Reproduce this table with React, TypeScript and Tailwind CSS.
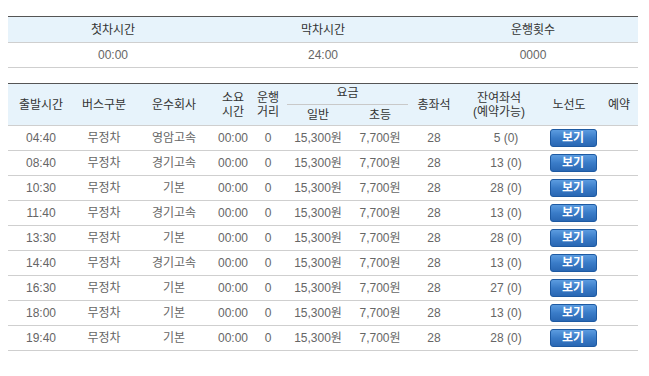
const rows = [
  { time: "04:40", company: "영암고속", left: "5 (0)" },
  { time: "08:40", company: "경기고속", left: "13 (0)" },
  { time: "10:30", company: "기본", left: "28 (0)" },
  { time: "11:40", company: "경기고속", left: "13 (0)" },
  { time: "13:30", company: "기본", left: "28 (0)" },
  { time: "14:40", company: "경기고속", left: "13 (0)" },
  { time: "16:30", company: "기본", left: "27 (0)" },
  { time: "18:00", company: "기본", left: "13 (0)" },
  { time: "19:40", company: "기본", left: "28 (0)" },
]

const font = { fontFamily: '"Liberation Sans", "Noto Sans CJK KR", sans-serif' }

function ViewButton() {
  return (
    <button className="relative h-[18px] w-[47px] overflow-hidden rounded-[3px] border border-[#1e5aa2] bg-gradient-to-b from-[#5c9ce0] via-[#3a7cc8] to-[#2a68b4] text-[12px] font-bold leading-[16px] text-white">
      보기
    </button>
  )
}

export default function App() {
  return (
    <div className="min-h-screen bg-white px-2 pt-4 text-[12px]" style={font}>
      <table className="w-[630px] table-fixed border-collapse text-center">
        <thead>
          <tr className="h-[26px] border-t border-[#555] border-b border-b-[#cfcfcf] bg-[#e7f3fb] text-[#333]">
            <th className="font-normal">첫차시간</th>
            <th className="font-normal">막차시간</th>
            <th className="font-normal">운행횟수</th>
          </tr>
        </thead>
        <tbody>
          <tr className="h-[25px] border-b border-[#cfcfcf] text-[#666]">
            <td>00:00</td>
            <td>24:00</td>
            <td>0000</td>
          </tr>
        </tbody>
      </table>

      <table className="mt-[15px] w-[630px] table-fixed border-collapse text-center">
        <colgroup>
          <col className="w-[66px]" />
          <col className="w-[60px]" />
          <col className="w-[80px]" />
          <col className="w-[38px]" />
          <col className="w-[32px]" />
          <col className="w-[68px]" />
          <col className="w-[56px]" />
          <col className="w-[52px]" />
          <col className="w-[78px]" />
          <col className="w-[62px]" />
          <col className="w-[38px]" />
        </colgroup>
        <thead className="bg-[#e7f3fb] text-[#333]">
          <tr className="h-[21px] border-t border-[#555]">
            <th rowSpan={2} className="font-normal">출발시간</th>
            <th rowSpan={2} className="font-normal">버스구분</th>
            <th rowSpan={2} className="font-normal">운수회사</th>
            <th rowSpan={2} className="font-normal leading-[14px]">소요<br />시간</th>
            <th rowSpan={2} className="font-normal leading-[14px]">운행<br />거리</th>
            <th colSpan={2} className="p-0 align-bottom font-normal">
              <div className="ml-[3px] border-b border-[#c9c9c9] pb-[3px] leading-[15px]">요금</div>
            </th>
            <th rowSpan={2} className="font-normal">총좌석</th>
            <th rowSpan={2} className="font-normal leading-[14px]">잔여좌석<br />(예약가능)</th>
            <th rowSpan={2} className="font-normal">노선도</th>
            <th rowSpan={2} className="font-normal">예약</th>
          </tr>
          <tr className="h-[21px] border-b border-[#cfcfcf]">
            <th className="font-normal">일반</th>
            <th className="font-normal">초등</th>
          </tr>
        </thead>
        <tbody className="text-[#666]">
          {rows.map((r) => (
            <tr key={r.time} className="h-[25px] border-b border-[#cfcfcf]">
              <td>{r.time}</td>
              <td>무정차</td>
              <td>{r.company}</td>
              <td>00:00</td>
              <td>0</td>
              <td>15,300원</td>
              <td>7,700원</td>
              <td>28</td>
              <td className="pl-[14px]">{r.left}</td>
              <td className="pl-[8px]">
                <div className="flex justify-center">
                  <ViewButton />
                </div>
              </td>
              <td></td>
            </tr>
          ))}
        </tbody>
      </table>
    </div>
  )
}
